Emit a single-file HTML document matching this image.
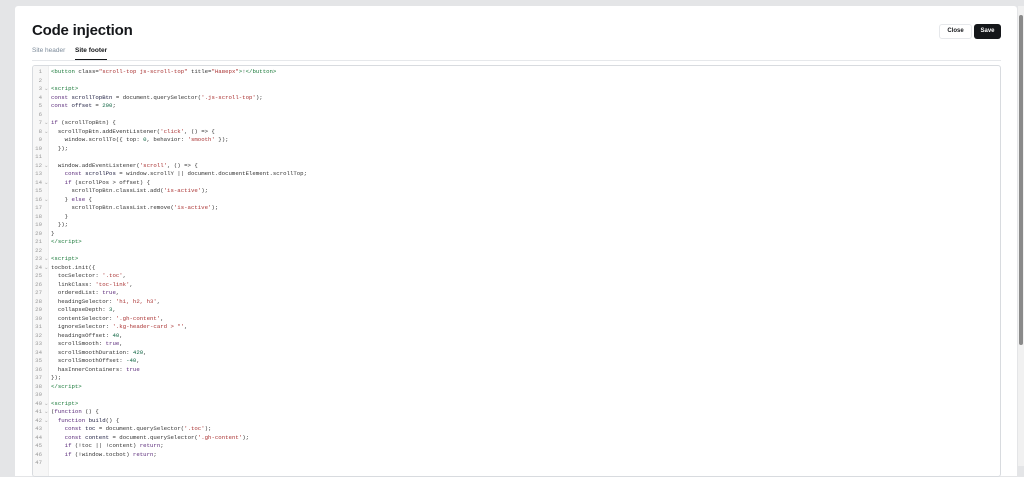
<!DOCTYPE html>
<html><head><meta charset="utf-8"><style>
html,body{margin:0;padding:0;width:1024px;height:466px;overflow:hidden;background:#e4e5e7;font-family:"Liberation Sans",sans-serif}
.panel{position:absolute;left:15px;top:6px;width:1002px;height:470px;background:#fff;border-radius:3px 3px 0 0}
.sb{position:absolute;left:1018px;top:6px;width:6px;height:460px;background:#f1f1f1}
.sb i{position:absolute;left:1px;top:9px;width:4px;height:330px;background:#8a8a8a;border-radius:2px}
h1{position:absolute;left:32px;top:22px;margin:0;font-size:15px;font-weight:700;color:#15171a;letter-spacing:-0.2px}
.tab{position:absolute;top:47px;font-size:6.5px;color:#7c8b9a}
.tab.a{color:#15171a;font-weight:700}
.ul{position:absolute;left:75px;top:59px;width:32px;height:1px;background:#15171a}
.sep{position:absolute;left:32px;top:60px;width:969px;height:1px;background:#e6e8eb}
.btn{position:absolute;top:24px;height:15px;border-radius:3px;font-size:6px;font-weight:700;line-height:15px;text-align:center}
.close{left:939px;width:31px;border:1px solid #e6e8eb;height:13px;line-height:13px;color:#15171a}
.save{left:974px;width:27px;background:#15171a;color:#fff}
.ed{position:absolute;left:32px;top:65px;width:967px;height:410px;border:1px solid #d8dbdf;border-radius:3px;overflow:hidden}
.gut{position:absolute;left:0;top:0;width:15px;height:100%;background:#f7f7f7;border-right:1px solid #eee}
pre{position:absolute;left:0;top:2px;margin:0;font-family:"Liberation Mono",monospace;font-size:5.7px;line-height:8.5px;color:#333}
.n{display:inline-block;width:9px;text-align:right;color:#999;margin-right:2px}
.f{display:inline-block;width:7px;color:#aaa}
.k{color:#5a2a7a}.s{color:#a33}.t{color:#1a7a3a}.d{color:#224}.m{color:#164}.p{color:#333}
</style></head><body>
<div class="panel"></div>
<div class="sb"><i></i></div>
<h1>Code injection</h1>
<div class="tab" style="left:32px">Site header</div>
<div class="tab a" style="left:75px">Site footer</div>
<div class="sep"></div><div class="ul"></div>
<div class="btn close">Close</div><div class="btn save">Save</div>
<div class="ed"><div class="gut"></div>
<pre><span class="n">1</span><span class="f"></span><span class="t">&lt;button</span> class=<span class="s">"scroll-top js-scroll-top"</span> title=<span class="s">"Наверх"</span><span class="t">&gt;</span>↑<span class="t">&lt;/button&gt;</span>
<span class="n">2</span><span class="f"></span>
<span class="n">3</span><span class="f">⌄</span><span class="t">&lt;script&gt;</span>
<span class="n">4</span><span class="f"></span><span class="k">const</span> <span class="d">scrollTopBtn</span> = document.querySelector(<span class="s">'.js-scroll-top'</span>);
<span class="n">5</span><span class="f"></span><span class="k">const</span> <span class="d">offset</span> = <span class="m">200</span>;
<span class="n">6</span><span class="f"></span>
<span class="n">7</span><span class="f">⌄</span><span class="k">if</span> (scrollTopBtn) {
<span class="n">8</span><span class="f">⌄</span>  scrollTopBtn.addEventListener(<span class="s">'click'</span>, () =&gt; {
<span class="n">9</span><span class="f"></span>    window.scrollTo({ <span class="p">top</span>: <span class="m">0</span>, <span class="p">behavior</span>: <span class="s">'smooth'</span> });
<span class="n">10</span><span class="f"></span>  });
<span class="n">11</span><span class="f"></span>
<span class="n">12</span><span class="f">⌄</span>  window.addEventListener(<span class="s">'scroll'</span>, () =&gt; {
<span class="n">13</span><span class="f"></span>    <span class="k">const</span> <span class="d">scrollPos</span> = window.scrollY || document.documentElement.scrollTop;
<span class="n">14</span><span class="f">⌄</span>    <span class="k">if</span> (scrollPos &gt; offset) {
<span class="n">15</span><span class="f"></span>      scrollTopBtn.classList.add(<span class="s">'is-active'</span>);
<span class="n">16</span><span class="f">⌄</span>    } <span class="k">else</span> {
<span class="n">17</span><span class="f"></span>      scrollTopBtn.classList.remove(<span class="s">'is-active'</span>);
<span class="n">18</span><span class="f"></span>    }
<span class="n">19</span><span class="f"></span>  });
<span class="n">20</span><span class="f"></span>}
<span class="n">21</span><span class="f"></span><span class="t">&lt;/script&gt;</span>
<span class="n">22</span><span class="f"></span>
<span class="n">23</span><span class="f">⌄</span><span class="t">&lt;script&gt;</span>
<span class="n">24</span><span class="f">⌄</span>tocbot.init({
<span class="n">25</span><span class="f"></span>  <span class="p">tocSelector</span>: <span class="s">'.toc'</span>,
<span class="n">26</span><span class="f"></span>  <span class="p">linkClass</span>: <span class="s">'toc-link'</span>,
<span class="n">27</span><span class="f"></span>  <span class="p">orderedList</span>: <span class="k">true</span>,
<span class="n">28</span><span class="f"></span>  <span class="p">headingSelector</span>: <span class="s">'h1, h2, h3'</span>,
<span class="n">29</span><span class="f"></span>  <span class="p">collapseDepth</span>: <span class="m">3</span>,
<span class="n">30</span><span class="f"></span>  <span class="p">contentSelector</span>: <span class="s">'.gh-content'</span>,
<span class="n">31</span><span class="f"></span>  <span class="p">ignoreSelector</span>: <span class="s">'.kg-header-card &gt; *'</span>,
<span class="n">32</span><span class="f"></span>  <span class="p">headingsOffset</span>: <span class="m">40</span>,
<span class="n">33</span><span class="f"></span>  <span class="p">scrollSmooth</span>: <span class="k">true</span>,
<span class="n">34</span><span class="f"></span>  <span class="p">scrollSmoothDuration</span>: <span class="m">420</span>,
<span class="n">35</span><span class="f"></span>  <span class="p">scrollSmoothOffset</span>: <span class="m">-40</span>,
<span class="n">36</span><span class="f"></span>  <span class="p">hasInnerContainers</span>: <span class="k">true</span>
<span class="n">37</span><span class="f"></span>});
<span class="n">38</span><span class="f"></span><span class="t">&lt;/script&gt;</span>
<span class="n">39</span><span class="f"></span>
<span class="n">40</span><span class="f">⌄</span><span class="t">&lt;script&gt;</span>
<span class="n">41</span><span class="f">⌄</span>(<span class="k">function</span> () {
<span class="n">42</span><span class="f">⌄</span>  <span class="k">function</span> <span class="d">build</span>() {
<span class="n">43</span><span class="f"></span>    <span class="k">const</span> <span class="d">toc</span> = document.querySelector(<span class="s">'.toc'</span>);
<span class="n">44</span><span class="f"></span>    <span class="k">const</span> <span class="d">content</span> = document.querySelector(<span class="s">'.gh-content'</span>);
<span class="n">45</span><span class="f"></span>    <span class="k">if</span> (!toc || !content) <span class="k">return</span>;
<span class="n">46</span><span class="f"></span>    <span class="k">if</span> (!window.tocbot) <span class="k">return</span>;
<span class="n">47</span><span class="f"></span>
</pre></div>
</body></html>
